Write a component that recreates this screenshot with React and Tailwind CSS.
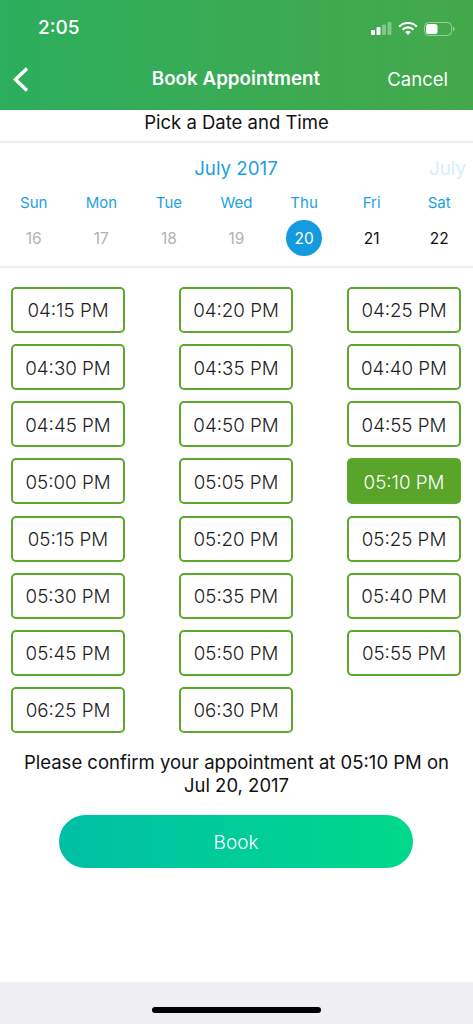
import React from "react";

const times = [
  "04:15 PM", "04:20 PM", "04:25 PM",
  "04:30 PM", "04:35 PM", "04:40 PM",
  "04:45 PM", "04:50 PM", "04:55 PM",
  "05:00 PM", "05:05 PM", "05:10 PM",
  "05:15 PM", "05:20 PM", "05:25 PM",
  "05:30 PM", "05:35 PM", "05:40 PM",
  "05:45 PM", "05:50 PM", "05:55 PM",
  "06:25 PM", "06:30 PM",
];

const days = [
  { name: "Sun", date: "16", past: true },
  { name: "Mon", date: "17", past: true },
  { name: "Tue", date: "18", past: true },
  { name: "Wed", date: "19", past: true },
  { name: "Thu", date: "20", selected: true },
  { name: "Fri", date: "21" },
  { name: "Sat", date: "22" },
];

const StatusIcons = () => (
  <div className="flex items-center gap-[6px]">
    <svg width="21" height="13" viewBox="0 0 21 13" fill="#fff">
      <rect x="0" y="8" width="4" height="5" rx="1" />
      <rect x="5.500" y="5" width="4" height="8" rx="1" />
      <rect x="11" y="2.500" width="4" height="10.500" rx="1" opacity="0.35" />
      <rect x="16.500" y="0" width="4" height="13" rx="1" opacity="0.35" />
    </svg>
    <svg width="20" height="13" viewBox="0 0 20 13" fill="none" stroke="#fff" strokeWidth="2.200">
      <path d="M1.200 4.600a12.500 12.500 0 0 1 17.600 0" />
      <path d="M4.500 7.700a7.800 7.800 0 0 1 11 0" />
      <path d="M10 13l-2.800-2.900a4 4 0 0 1 5.600 0z" fill="#fff" stroke="none" />
    </svg>
    <svg width="31" height="14" viewBox="0 0 31 14" fill="none">
      <rect x="0.500" y="0.500" width="27" height="13" rx="4" stroke="#fff" strokeOpacity="0.45" />
      <rect x="2" y="2" width="11.500" height="10" rx="2.500" fill="#fff" />
      <path d="M29 4.500v5c1-.4 1.600-1.400 1.600-2.500S30 4.900 29 4.500z" fill="#fff" fillOpacity="0.45" />
    </svg>
  </div>
);

const App = () => {
  return (
    <div className="flex flex-col w-[473px] h-[1024px] overflow-hidden bg-white font-['Inter','Liberation_Sans',sans-serif]">
      {/* header */}
      <div className="h-[110px] shrink-0 bg-gradient-to-r from-[#2bae5e] to-[#44a84a] text-white">
        <div className="flex items-center justify-between h-[56px] pl-[38px] pr-[18px] pt-[1px]">
          <span className="text-[19px] font-medium">2:05</span>
          <StatusIcons />
        </div>
        <div className="relative flex items-center justify-between h-[44px] pl-[13px] pr-[25px] pt-[3px]">
          <svg width="16" height="25" viewBox="0 0 16 25" fill="none" stroke="#fff" strokeWidth="3.400">
            <path d="M14 1.500L2.500 12.500L14 23.500" />
          </svg>
          <span className="absolute left-0 right-0 pr-[1px] text-center text-[18.800px] font-semibold">Book Appointment</span>
          <span className="text-[18.500px]">Cancel</span>
        </div>
      </div>

      <div className="h-[33px] shrink-0 border-b-2 border-[#efefef] flex items-center justify-center text-[18.500px] text-[#111] pb-[5px]">
        Pick a Date and Time
      </div>

      {/* calendar */}
      <div className="relative h-[125px] shrink-0 border-b-2 border-[#efefef]">
        <div className="flex justify-center pt-[13px] pr-[1px] text-[18.750px] leading-[26px] text-[#1c9fe0]">July 2017</div>
        <span className="absolute right-[7px] top-[13px] text-[18.750px] leading-[26px] text-[#d5eefa]">July</span>
        <div className="grid grid-cols-7 mt-[11px]">
          {days.map((d) => (
            <div key={d.name} className="flex flex-col items-center">
              <span className="text-[15px] leading-[20px] text-[#1c9fe0]">{d.name}</span>
              <span
                className={`mt-[7px] pt-[1px] flex items-center justify-center w-[36px] h-[36px] rounded-full text-[15.500px] ${
                  d.selected ? "bg-[#149bdf] text-white" : d.past ? "text-[#b3b3b3]" : "text-[#111]"
                }`}
              >
                {d.date}
              </span>
            </div>
          ))}
        </div>
      </div>

      {/* times */}
      <div className="grid grid-cols-[114px_114px_114px] justify-between gap-y-[11.150px] pl-[11px] pr-[12px] pt-[19px] shrink-0">
        {times.map((t) => (
          <div
            key={t}
            className={`flex items-center justify-center h-[46px] pt-[3px] rounded-[5px] border-2 border-[#5aa82c] text-[18.750px] font-light ${
              t === "05:10 PM" ? "bg-[#58a52a] text-white" : "text-[#222]"
            }`}
          >
            {t}
          </div>
        ))}
      </div>

      <p className="mt-[18px] px-[20px] text-center text-[18.500px] leading-[23px] text-[#111] shrink-0">
        Please confirm your appointment at 05:10 PM on Jul 20, 2017
      </p>

      <div className="flex justify-center mt-[18px] pr-[1px] shrink-0">
        <div className="flex items-center justify-center w-[354px] h-[53px] pt-[3px] rounded-full bg-gradient-to-r from-[#00bfa5] to-[#00d98a] text-white text-[19px] font-light">
          Book
        </div>
      </div>

      {/* home bar */}
      <div className="mt-auto h-[42px] shrink-0 bg-[#efeff4] flex justify-center items-end pb-[11px]">
        <div className="w-[169px] h-[6px] rounded-full bg-black" />
      </div>
    </div>
  );
};

export default App;
